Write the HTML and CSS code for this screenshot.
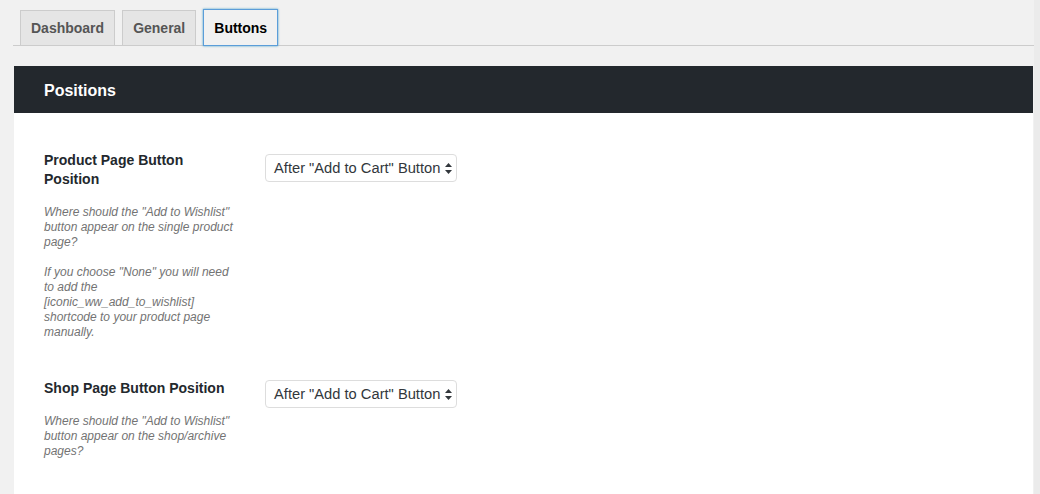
FILE: index.html
```html
<!DOCTYPE html>
<html>
<head>
<meta charset="utf-8">
<link rel="stylesheet" href="styles.css">
</head>
<body>
<div class="screen">
  <div class="wrap">
    <nav class="tabs">
      <a class="tab">Dashboard</a>
      <a class="tab">General</a>
      <a class="tab tab-active">Buttons</a>
    </nav>
    <section class="panel">
      <h2 class="panel-title">Positions</h2>
      <div class="panel-body">
        <div class="row">
          <div class="label-col">
            <div class="label">Product Page Button Position</div>
            <p class="desc">Where should the "Add to Wishlist" button appear on the single product page?</p>
            <p class="desc desc-gap">If you choose "None" you will need to add the [iconic_ww_add_to_wishlist] shortcode to your product page manually.</p>
          </div>
          <div class="field-col">
            <div class="select">
              <span>After "Add to Cart" Button</span>
              <svg class="arrows" width="7" height="11" viewBox="0 0 7 11"><path d="M3.5 0 L7 4 L0 4 Z M0 7 L7 7 L3.5 11 Z" fill="#32373c"/></svg>
            </div>
          </div>
        </div>
        <div class="row row-second">
          <div class="label-col">
            <div class="label">Shop Page Button Position</div>
            <p class="desc desc-second">Where should the "Add to Wishlist" button appear on the shop/archive pages?</p>
          </div>
          <div class="field-col field-second">
            <div class="select">
              <span>After "Add to Cart" Button</span>
              <svg class="arrows" width="7" height="11" viewBox="0 0 7 11"><path d="M3.5 0 L7 4 L0 4 Z M0 7 L7 7 L3.5 11 Z" fill="#32373c"/></svg>
            </div>
          </div>
        </div>
      </div>
    </section>
  </div>
  <div class="scroll-strip"></div>
</div>
</body>
</html>
```

FILE: styles.css
```css
html, body {
  margin: 0;
  padding: 0;
  height: 100%;
  overflow: hidden;
  background: #f1f1f1;
  font-family: "Liberation Sans", Arial, sans-serif;
}

.screen {
  display: flex;
  height: 494px;
}

.wrap {
  width: 1021px;
  margin-left: 13px;
  padding-top: 10px;
}

.scroll-strip {
  flex: 1;
  background: #ebebeb;
}

.tabs {
  display: flex;
  gap: 7px;
  padding-left: 7px;
  border-bottom: 1px solid #ccc;
  height: 35px;
}

.tab {
  box-sizing: border-box;
  height: 35px;
  padding: 6px 10px 4px 10px;
  font-size: 14px;
  font-weight: bold;
  line-height: 23px;
  color: #555;
  background: #e5e5e5;
  border: 1px solid #ccc;
  border-bottom: none;
}

.tab-active {
  margin-top: -1px;
  height: 37px;
  color: #000;
  background: #f1f1f1;
  border: 1px solid #5b9dd9;
  box-shadow: 0 0 2px rgba(30, 140, 190, 0.8);
  padding-top: 7px;
  position: relative;
}

.panel {
  margin: 20px 1px 0 1px;
  background: #fff;
  height: 500px;
}

.panel-title {
  margin: 0;
  height: 47px;
  box-sizing: border-box;
  padding: 1px 30px 0 30px;
  background: #23282d;
  color: #fff;
  font-size: 16px;
  font-weight: bold;
  line-height: 47px;
}

.panel-body {
  padding: 38px 30px 0 30px;
}

.row {
  display: grid;
  grid-template-columns: 221px 1fr;
}

.row-second {
  margin-top: 39px;
}

.label {
  width: 194px;
  font-size: 14px;
  font-weight: bold;
  line-height: 19px;
  color: #23282d;
}

.desc {
  width: 196px;
  margin: 16px 0 0 0;
  font-size: 12px;
  line-height: 15px;
  font-style: italic;
  color: #737373;
}

.desc-gap {
  margin-top: 15px;
}

.desc-second {
  margin-top: 16px;
}

.field-col {
  padding-top: 3px;
}

.field-second {
  padding-top: 1px;
}

.select {
  box-sizing: border-box;
  width: 192px;
  height: 28px;
  border: 1px solid #ddd;
  border-radius: 4px;
  display: flex;
  align-items: center;
  justify-content: space-between;
  padding: 0 4px 0 8px;
  font-size: 14.7px;
  color: #32373c;
  background: #fff;
}

.arrows {
  display: block;
}
```
